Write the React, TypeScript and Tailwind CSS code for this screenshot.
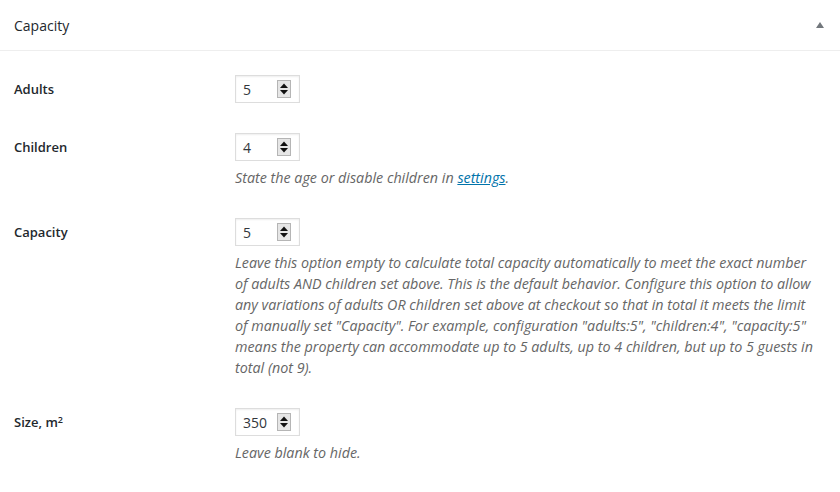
import React from 'react';

const font = { fontFamily: '"Open Sans", "Noto Sans", sans-serif' };

function Spinner() {
    return (
        <div className="flex h-[18px] w-[14px] flex-col justify-between border border-[#b5b5b5] bg-[#e6e6e6] py-[1px]">
            <svg width="12" height="7" viewBox="0 0 12 7"><path d="M2 6 L6 1.5 L10 6 Z" fill="#111" /></svg>
            <svg width="12" height="7" viewBox="0 0 12 7"><path d="M2 1 L6 5.5 L10 1 Z" fill="#111" /></svg>
        </div>
    );
}

function NumberBox({ value }: { value: string }) {
    return (
        <div className="flex h-[28px] w-[65px] items-center justify-between border border-[#dddddd] bg-white pl-[7px] pr-[8px] shadow-[inset_0_1px_2px_rgba(0,0,0,0.07)]">
            <span className="text-[14px] text-[#32373c]">{value}</span>
            <Spinner />
        </div>
    );
}

interface RowProps {
    label: React.ReactNode;
    value: string;
    desc?: React.ReactNode[];
}

function Row({ label, value, desc }: RowProps) {
    return (
        <div className="flex py-[15px]">
            <div className="w-[235px] shrink-0 pl-[14px] pt-[5px] text-[13px] font-semibold leading-[18px] text-[#23282d]">
                {label}
            </div>
            <div className="flex flex-col">
                <NumberBox value={value} />
                {desc && (
                    <div className="mt-[6px] text-[14.3px] italic leading-[21px] text-[#666666]">
                        {desc.map((line, i) => (
                            <div key={i} className="whitespace-nowrap">{line}</div>
                        ))}
                    </div>
                )}
            </div>
        </div>
    );
}

export default function App() {
    return (
        <div className="min-h-screen w-full bg-white" style={font}>
            {/* Metabox header */}
            <div className="flex h-[51px] items-center justify-between border-b border-[#eeeeee] px-[14px]">
                <span className="text-[14px] text-[#23282d]">Capacity</span>
                <svg width="10" height="8" viewBox="0 0 10 8" className="mr-[1px]">
                    <path d="M1 7 L5 1 L9 7 Z" fill="#72777c" />
                </svg>
            </div>

            <div className="pt-[9px]">
                <Row label="Adults" value="5" />
                <Row
                    label="Children"
                    value="4"
                    desc={[
                        <>State the age or disable children in <a href="#" className="text-[#0073aa] underline">settings</a>.</>,
                    ]}
                />
                <Row
                    label="Capacity"
                    value="5"
                    desc={[
                        'Leave this option empty to calculate total capacity automatically to meet the exact number',
                        'of adults AND children set above. This is the default behavior. Configure this option to allow',
                        'any variations of adults OR children set above at checkout so that in total it meets the limit',
                        'of manually set "Capacity". For example, configuration "adults:5", "children:4", "capacity:5"',
                        'means the property can accommodate up to 5 adults, up to 4 children, but up to 5 guests in',
                        'total (not 9).',
                    ]}
                />
                <Row
                    label={<>Size, m<sup className="text-[9px]">2</sup></>}
                    value="350"
                    desc={['Leave blank to hide.']}
                />
            </div>
        </div>
    );
}
